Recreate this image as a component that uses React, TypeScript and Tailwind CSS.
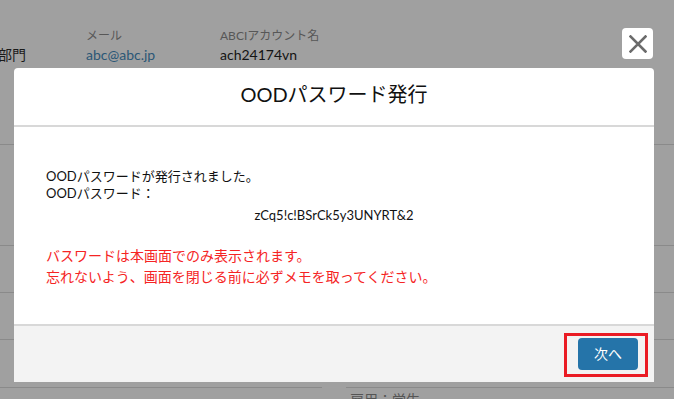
import React from 'react';

const font = { fontFamily: "Lato, 'Noto Sans CJK JP', sans-serif" };

function CloseIcon() {
    return (
        <svg width="18" height="18" viewBox="0 0 18 18" fill="none">
            <path d="M1.5 1.5L16.5 16.5M16.5 1.5L1.5 16.5" stroke="#6b6b6b" strokeWidth={2.6} strokeLinecap="square" />
        </svg>
    );
}

export default function App() {
    return (
        <div className="relative w-full h-[399px] overflow-hidden bg-[#a0a0a0]" style={font}>
            {/* dimmed page behind the modal */}
            <div className="h-[145px] border-b border-[#8a8a8a]">
                <div className="flex pt-[27px]">
                    <div className="w-[88px] -ml-[2px]">
                        <div className="h-[18px]" />
                        <div className="text-[14px] leading-[20px] text-[#1a1a1a]">部門</div>
                    </div>
                    <div className="w-[134px]">
                        <div className="text-[12px] leading-[18px] text-[#575757]">メール</div>
                        <div className="text-[14px] leading-[20px] text-[#2b5776]">abc@abc.jp</div>
                    </div>
                    <div>
                        <div className="text-[12px] leading-[18px] text-[#575757]">ABCIアカウント名</div>
                        <div className="text-[14px] leading-[20px] text-[#141414]">ach24174vn</div>
                    </div>
                </div>
            </div>
            <div className="h-[101px] border-b border-[#8a8a8a]" />
            <div className="h-[47px] border-b border-[#8a8a8a]" />
            <div className="h-[47px] border-b border-[#8a8a8a]" />
            <div className="flex gap-[24px]">
                <div className="w-[322px] h-[48px] border-b border-[#8a8a8a]" />
                <div className="flex-1 h-[48px] border-b border-[#8a8a8a]" />
            </div>
            <div className="pl-[350px] pt-[2px] text-[14px] leading-[20px] text-[#555]">雇用：学生</div>

            {/* close button */}
            <button className="absolute left-[622px] top-[28px] w-[31px] h-[31px] rounded-[4px] bg-white flex items-center justify-center">
                <CloseIcon />
            </button>

            {/* modal */}
            <div className="absolute left-[14px] top-[68px] w-[640px] bg-white rounded-t-[4px]">
                <div className="h-[59px] border-b-2 border-[#d8d8d8] flex items-center justify-center">
                    <h2 className="text-[20px] leading-[25px] text-[#111] -mt-[5px]">OODパスワード発行</h2>
                </div>
                <div className="h-[197px] px-[32px] pt-[41px] text-[13px] text-[#111]">
                    <p className="leading-[17px]">OODパスワードが発行されました。</p>
                    <p className="leading-[17px]">OODパスワード：</p>
                    <p className="leading-[17px] mt-[5px] text-center -ml-[32px] -mr-[32px]">zCq5!c!BSrCk5y3UNYRT&amp;2</p>
                    <div className="mt-[21px] text-[14px] text-[#f52424]">
                        <p className="leading-[21px]">バスワードは本画面でのみ表示されます。</p>
                        <p className="leading-[21px]">忘れないよう、画面を閉じる前に必ずメモを取ってください。</p>
                    </div>
                </div>
                <div className="h-[58px] border-t-2 border-[#d8d8d8] bg-[#f3f3f3] flex items-center justify-end pr-[16px]">
                    <div className="relative">
                        <button className="w-[60px] h-[32px] rounded-[4px] bg-[#2574a9] text-white text-[14px] leading-[32px] text-center">
                            次へ
                        </button>
                        <div className="absolute -left-[14px] -top-[5px] w-[84px] h-[44px] border-[3px] border-[#ea1b24]" />
                    </div>
                </div>
            </div>
        </div>
    );
}
